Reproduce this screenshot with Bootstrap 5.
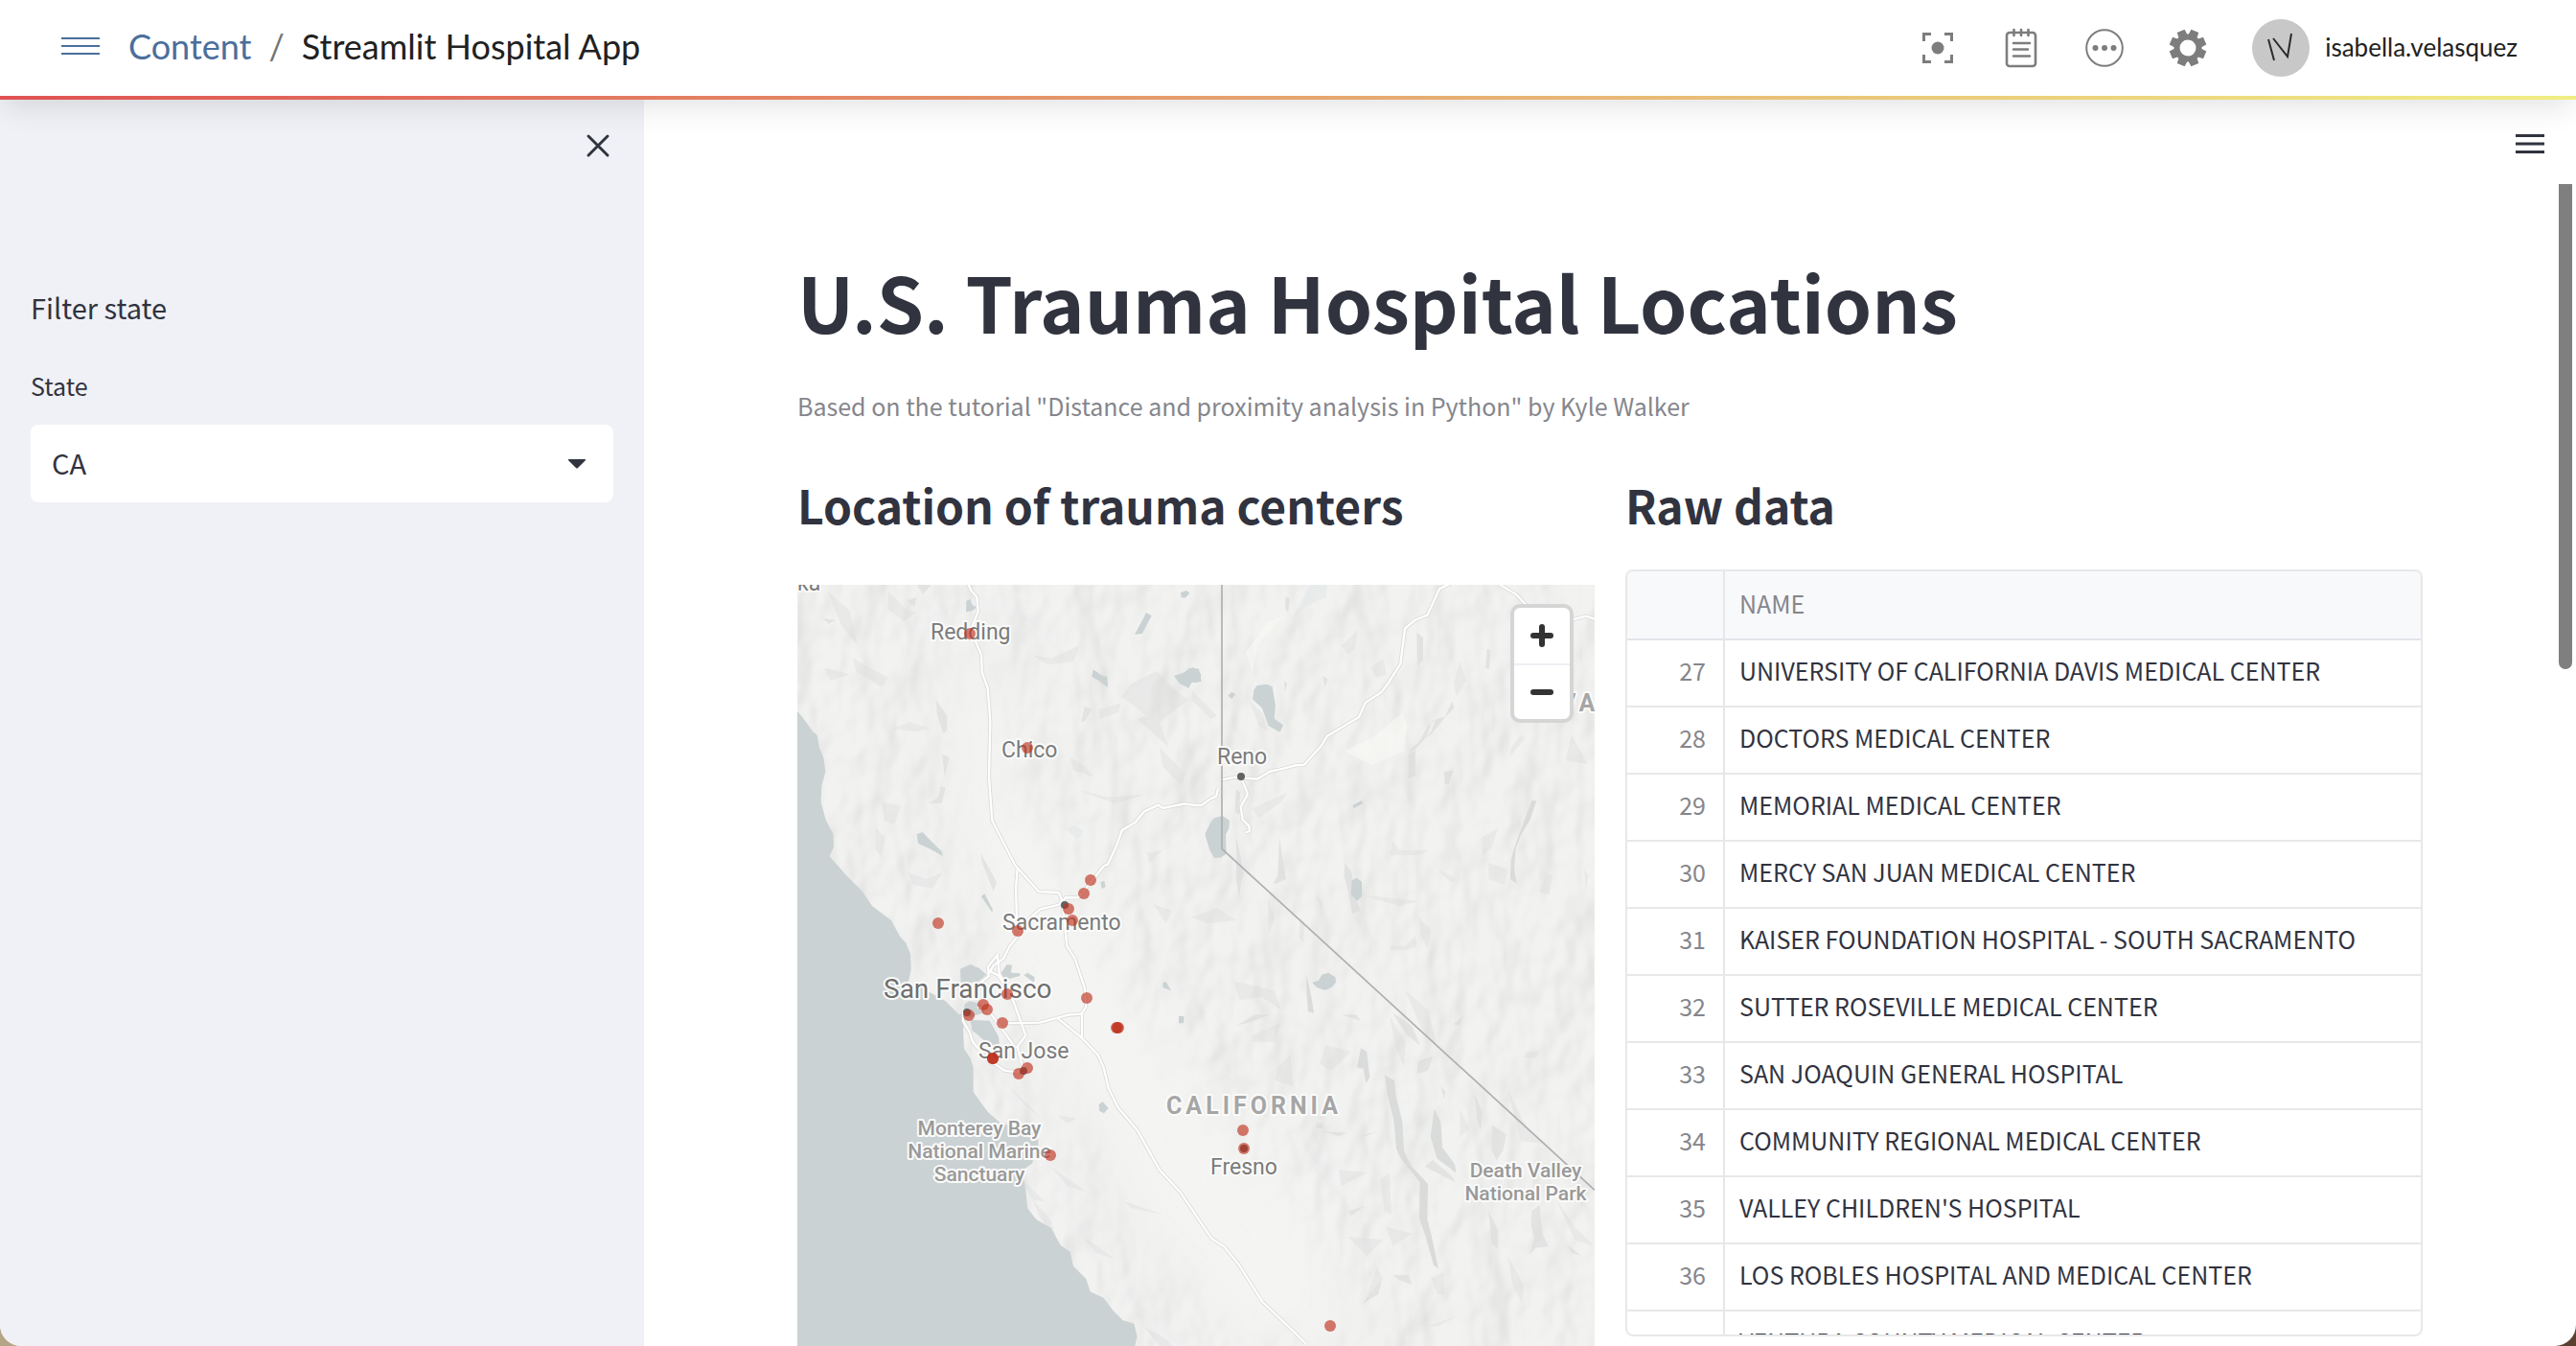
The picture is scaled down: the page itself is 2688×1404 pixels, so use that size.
<!DOCTYPE html>
<html lang="en">
<head>
<meta charset="utf-8">
<meta name="viewport" content="width=device-width, initial-scale=1">
<title>Streamlit Hospital App</title>
<link href="https://cdn.jsdelivr.net/npm/bootstrap@5.3.0/dist/css/bootstrap.min.css" rel="stylesheet">
<style>
:root { --ink: #31333f; --muted-ink: #85868c; --line: #e8e8e9; }
body { background: linear-gradient(90deg, #b3a585 50%, #5b4030 50%); height: 100vh; overflow: hidden; font-family: "Noto Sans CJK SC", "Noto Sans", sans-serif; color: var(--ink); }
.app-frame { background: #fff; border-radius: 0 0 22px 22px; }
.topbar { font-family: Lato, sans-serif; height: 104px; padding: 0 61px 4px 64px; z-index: 3; background: linear-gradient(90deg, #e05252, #e8b874 62%, #f0ee83) bottom / 100% 4px no-repeat, #fff; box-shadow: 0 10px 30px -4px rgba(0,0,0,.12); }
.crumbs { font-size: 36px; line-height: 44px; gap: 18px; color: #212121; padding-bottom: 4px; }
.crumbs a { color: #4a6f9c; text-decoration: none; }
.crumbs .divider { color: #757575; }
.nav-toggle { margin: 0 30px 4px 0; }
.tools { gap: 27px; margin-right: 37px; }
.tool { width: 60px; height: 60px; color: #7d7d7d; }
.plain { background: none; border: 0; padding: 0; display: flex; align-items: center; justify-content: center; }
.user-name { font-size: 26px; line-height: 32px; color: #212121; padding-bottom: 2px; }
.side { flex: 0 0 25%; background: #f0f1f6; padding: 0 32px; }
.bar-row { height: 96px; }
.side h2 { font-size: 29px; line-height: 40px; font-weight: 400; margin: 100px 0 42px; }
.side label { font-size: 25px; line-height: 40px; margin-bottom: 21px; }
.state-select { height: 81px; font-size: 29px; line-height: 40px; padding: 0 64px 4px 22px; border: 0; border-radius: 8px; color: var(--ink); background-color: #fff; background-position: right 28px center; background-size: 20px 10px;
  --bs-form-select-bg-img: url("data:image/svg+xml,%3csvg xmlns='http://www.w3.org/2000/svg' viewBox='0 0 20 10'%3e%3cpath d='M2 0h16q2 0 .6 1.4L11 9q-1 1-2 0L1.400 1.400Q0 0 2 0z' fill='%2331333f'/%3e%3c/svg%3e"); }
.content-pad { padding: 0 160px; }
h1.page-title { font-size: 79px; line-height: 96px; font-weight: 700; margin: 66px 0 41px; }
.caption-text { font-size: 25px; line-height: 40px; color: var(--muted-ink); margin: 0 0 53px; }
.section-title { font-size: 48px; line-height: 60px; font-weight: 700; margin: 0 0 38px; }
.split { --bs-gutter-x: 32px; }
.map-box svg.map { display: block; width: 100%; }
.section-title + .map-box { margin-top: 54px; }
.zoomer { top: 20px; right: 22px; border: 4px solid #d5d5d5; border-radius: 10px; background: #fff; }
.zoomer button { width: 58px; height: 58px; }
.zoomer button + button { border-top: 2px solid #eeeff3; }
.frame { height: 800px; border: 2px solid var(--line); border-radius: 8px; overflow: hidden; }
.grid-data { font-size: 25px; margin: 0; table-layout: fixed; width: 100%; border-collapse: separate; border-spacing: 0; }
.grid-data th, .grid-data td { height: 70px; line-height: 62px; padding: 0 16px 6px; border-bottom: 2px solid var(--line); font-weight: 400; white-space: nowrap; }
.grid-data thead th { height: 72px; line-height: 66px; padding-bottom: 4px; background: #f8f9fb; color: var(--muted-ink); border-bottom-color: #e3e4e9; }
.grid-data th:first-child { width: 102px; text-align: right; padding-right: 18px; border-right: 2px solid #e6e7ea; color: var(--muted-ink); }
.grid-data td, .grid-data thead th:last-child { padding-left: 15px; }
.thumb { right: 4px; top: 88px; width: 14px; height: 506px; background: #7f7f7f; border-radius: 0 0 7px 7px; }
.menu-row { padding: 0 32px 4px 0; }
.map text { font-family: Roboto, sans-serif; paint-order: stroke; stroke: #fbfbfa; stroke-width: 4px; stroke-linejoin: round; }
.city { font-size: 23px; fill: #7b7b7b; }
.big-city { font-size: 28px; fill: #6f6f6f; }
.park { font-size: 21px; font-weight: 500; fill: #999; text-anchor: middle; }
.region { font-size: 25px; font-weight: 700; fill: #a6a6a6; letter-spacing: 4px; }
</style>
<script src="https://cdn.jsdelivr.net/npm/bootstrap@5.3.0/dist/js/bootstrap.bundle.min.js"></script>
</head>
<body>
<div class="app-frame vh-100 d-flex flex-column overflow-hidden">
<header class="topbar d-flex align-items-center position-relative flex-shrink-0">
  <button class="plain nav-toggle" type="button" aria-label="Open navigation"><svg width="40" height="18" stroke="#4a6f9c" stroke-width="2"><path d="M0 1h40M0 9h40M0 17h40"/></svg></button>
  <nav class="crumbs d-flex align-items-center" aria-label="breadcrumb"><a href="#">Content</a><span class="divider">/</span><span>Streamlit Hospital App</span></nav>
  <div class="tools d-flex ms-auto">
    <button class="plain tool" type="button" aria-label="Focus"><svg width="32" height="32" fill="none" stroke="currentColor" stroke-width="3"><path d="M1.500 9V1.500H9M23 1.500h7.500V9M30.500 23v7.500H23M9 30.500H1.500V23"/><circle cx="16" cy="16" r="6.500" fill="currentColor" stroke="none"/></svg></button>
    <button class="plain tool" type="button" aria-label="Notes"><svg width="34" height="42" fill="none" stroke="currentColor" stroke-width="2.600" stroke-linecap="round"><rect x="2" y="5" width="30" height="35" rx="3"/><path d="M9.500 2v6M17 2v6M24.500 2v6M9 16h17M9 22.500h15M9 29.500h17"/></svg></button>
    <button class="plain tool" type="button" aria-label="More"><svg width="40" height="40"><circle cx="20" cy="20" r="18.800" fill="none" stroke="currentColor" stroke-width="2"/><g fill="currentColor"><circle cx="10.500" cy="20" r="3"/><circle cx="20" cy="20" r="3"/><circle cx="29.500" cy="20" r="3"/></g></svg></button>
    <button class="plain tool" type="button" aria-label="Settings"><svg id="gear" width="40" height="40" viewBox="-20 -20 40 40"></svg></button>
  </div>
  <div class="d-flex align-items-center gap-3">
    <svg width="60" height="60" aria-label="Profile"><circle cx="30" cy="30" r="30" fill="#c8c8c8"/><path d="M17 21l6 22M22 20l15 19 4-24" fill="none" stroke="#2b2b2b" stroke-width="2"/></svg>
    <span class="user-name">isabella.velasquez</span>
  </div>
</header>

<div class="d-flex flex-grow-1 overflow-hidden">
  <aside class="side">
    <div class="bar-row d-flex align-items-center justify-content-end">
      <button class="plain" type="button" aria-label="Close sidebar"><svg width="32" height="32" stroke="#31333f" stroke-width="3" stroke-linecap="round"><path d="M6 6l20 20M26 6L6 26"/></svg></button>
    </div>
    <h2>Filter state</h2>
    <label class="d-block" for="state">State</label>
    <select id="state" class="form-select state-select"><option>CA</option></select>
  </aside>

  <main class="flex-grow-1 position-relative overflow-hidden">
    <div class="bar-row menu-row d-flex align-items-center justify-content-end">
      <button class="plain" type="button" aria-label="Main menu"><svg width="32" height="22" stroke="#31333f" stroke-width="3"><path d="M1 2.500h30M1 11h30M1 19.500h30"/></svg></button>
    </div>
    <div class="thumb position-absolute"></div>
    <div class="content-pad">
      <h1 class="page-title">U.S. Trauma Hospital Locations</h1>
      <p class="caption-text">Based on the tutorial "Distance and proximity analysis in Python" by Kyle Walker</p>
      <div class="row split">
        <section class="col-6">
          <h2 class="section-title">Location of trauma centers</h2>
          <div class="map-box position-relative">
<svg class="map" viewBox="0 0 832 794" role="img" aria-label="Map of trauma centers in California">
<defs>
  <filter id="relief" x="0" y="0" width="100%" height="100%" color-interpolation-filters="sRGB">
    <feTurbulence type="fractalNoise" baseFrequency=".022 .014" numOctaves="3" seed="11" result="n"/>
    <feDiffuseLighting in="n" surfaceScale="9" diffuseConstant="1.080" lighting-color="#f3f3f4"><feDistantLight azimuth="215" elevation="62"/></feDiffuseLighting>
  </filter>
  <filter id="soft"><feGaussianBlur stdDeviation="28"/></filter>
  <mask id="hills"><rect width="832" height="794" fill="#fff"/>
    <path filter="url(#soft)" fill="#000" d="M150 60L230 60L225 200L290 310L330 400L440 560L560 690L600 800L470 800L360 700L260 520L205 400L160 260Z"/>
  </mask>
</defs>
<rect width="832" height="794" fill="#f0f0ef"/>
<path fill="#f4f4f3" filter="url(#soft)" d="M172 80L218 95L226 210L298 300L345 400L440 540L560 650L560 794L470 794L360 650L290 520L215 420L175 270L165 160Z"/>
<g mask="url(#hills)"><rect width="832" height="794" filter="url(#relief)" opacity=".13"/></g>
<g transform="scale(.333333) translate(-36 -60)">
  <!-- ridges and valleys -->
  <g fill="#dadbdb">
    <path opacity=".6" d="M410 60h45l-25 30zM380 110l30-12-8 30zM115 165l40 5-20 12zM470 420l35 50v45l-12 10-20-60zM485 690l15 5-12 48h-40l28-18zM935 440l22 10-20 35-12 5zM490 590l22 10-15 60zM610 900l50 90-10 30-35-90z"/>
    <path opacity=".35" d="M130 80l70 60 25 110-50-60zM210 290l110 60-20 30-80-50zM120 320l80 20-60 20zM330 510l60-20 60 20-40 10zM320 80l60 60 30 5-40 30-50-40zM770 280l60 10 90-40-20 50-80 10zM980 450l70-20-10 30-60 20zM1050 410l80 60-30 10 100 90-30-80 90-70-40-30-60-60-80 40zM890 600l50 30 20 30-60-20zM1170 570l80 80-10 40-60-60zM910 700l100 25 120-10-100 30zM380 960l60 20 50-20-30 50-60-10zM280 820l30 30-10 60-20-20zM300 740l60 10-20 60-30-10zM1130 900l50-10-40 40zM1150 1060l60 20-20 40z"/>
    <g transform="translate(1260)">
      <path opacity=".7" d="M305 95l12 10-4 40-10-10zM715 210l20 15v70l-18 20zM825 425l8 20-25 25-45 15-20 55 20-15 40-50zM775 480l-15 40-50 55-20 10 10-15 25-20 25-50zM690 590l20-12v80l-22 8zM800 645l30-5-10 30-5 15h-12zM935 260l12 5-6 60-10-5zM300 360l10 10-8 25zM420 345l16 10-8 25zM150 700l12 10-2 70-14-10zM150 850l14 60 8 50-14 75-8-50zM285 850l15 100 6 30-30 15h-10l14-25zM490 930l22 30 6 60 20 60-25 10-10-60-15-60z"/>
      <path d="M1075 735h15l-20 60-30 50-15 40-5 60 8 50-20-15 2-60 15-50z"/>
      <path opacity=".35" d="M10 390l80 80-20 10-60-60zM190 420l40 40 20 60-30-20zM480 250l50-50-10 60-20 20zM570 320l40-30 10 50-30 10zM850 300l20 60-30 50-10-40zM1040 530l15 10-50 60 5-30zM1200 530l50 90-70-10zM200 760l110-50-20 30-70 50zM640 860l20 30h90l-20 15h-100zM920 850l50-30-20 60-30 30zM780 950l60 30-20 10zM540 1030l180 20-60 15zM720 1100l40 40-10 60-20-40zM630 1190h50l30-30 5 30-30 12h-50zM350 1100l14 20-4 60-14-20zM250 1040l20 60-20 60zM10 1100l80-30 60 40-90 10zM400 1030l20 20-5 30zM940 930l60 20-10 50-50-20zM1120 960l20 10-10 60-30-10zM1240 950l12 20-8 50z"/>
    </g>
    <g transform="translate(1260 1200)">
      <path d="M625 400l20 10 5 50 20 80 5 90 20 45 55 60-2 110 15 60 20 95-15-10-25-90-20-60 2-110-40-50-20-25-14-30-8-90-20-80-8-60zM770 500l20 40 5 80 40 55 3 25-60-45-20-70zM540 310l18 10 10 80-12 20-8-45-20-5zM370 80l15 70 8 50-18-5-5-60z"/>
      <path opacity=".6" d="M640 200l60 40 25 60-40-30zM720 350l45-15-15 45-35 10zM950 550l45 30-10 50-20 30-15-30zM790 430l15 15-5 25zM940 820l30 60v60l-20-20zM1075 820l25-20 8 90 20 40-40 5-20 20 15-50-10-40zM895 450l25 60-5 60-12-40zM150 240l60-35h45l-50 20zM420 570l80 5-30 10zM590 570l-80 25 60-15zM740 680l95 50-10-20-60-50zM1185 925l45 35-30-10zM500 820l50-15-40 30zM545 1110l60-75-10 45zM640 1020h50l10 30-40-15zM400 545h22v16h-22zM830 235l30-25-10 30zM480 205h45l15 20z"/>
      <path opacity=".35" d="M680 130l70 60 30 120-50-60zM630 210l50 80-5 80-25-60zM140 100l130 30 20 60-60-40-70 10zM200 270l90-40-20 60h-70zM280 370l40-40 10 100-60-20zM430 300l80 20-60 60-40-20zM470 690l90 10-80 40zM600 720l30-20 5 130-20-10zM500 900l110 10-50 50zM620 870l80 20-60 40zM590 1000l20 30-60 80zM1000 440l60 120 60 50-80-10zM1060 320l40 0-10 20h-40zM850 500l30 60-30 30zM1150 780l60 90 60 60-60-20zM1000 960l50 90-5 60-30-60zM750 1180l90-30-60 30zM760 1030l40-20v70h-20z"/>
    </g>
    <path opacity=".4" transform="translate(0 1200)" d="M740 720l70 70-40-5zM690 420l110 110-50-40zM830 680l110 80-60-20zM1060 790l120 40-100-20zM930 900l100 70-60-20zM850 520l60 10-30 15zM770 780l60 70 15 50-50-60zM1120 1180l70 40 20 22h-40z"/>
  </g>
  <!-- ocean -->
  <path fill="#cad2d3" d="M36 455l24 30 25 35 13 10 7 40 13 30 6 45-12 45-2 50 15 55 23 45 2 40-13 30 53 60 50 50 30 45 60 45 27 50 18 20 15 35 2 50-14 60 32-18 40 28 50 28 42 42 15-3 3-30 15-10 30 8 25 26-50 16h-20l-5 40 3 60 20 30 9 30v75l28 40 20 25 35 30 45 15 40-10 35 45v30l-20 50-30 20 10 60 7 60 28 35 45 25 30 55 30 20 10 45 40 40 13 40 42 20 30 40 30 30 35 10 10 40-10 42H36z"/>
  <g fill="#cad2d3">
    <path d="M546 1262l32-14 28 12 22 20-28 22-52 6zM578 1422l60 2 28 50 4 40-45-25-42-35zM672 1278l20-30 16 2-4 24 30 2-2 8-45 12zM745 1282l12-8 22 14-2 16zM565 110l12-5 5 16 14 10-12 10-20 4zM1092 215l26-48 10-20 17 10-15 28-14 28zM962 325l26 18 18 5 2 34-28-22-22-12zM1215 345l30-10 20-15 28 3 8 40-30 2-10 18-28-14zM410 840l18-6 15 16 45 45 3 14-35-20-42-20zM612 1035l10-8 26 50-2 8zM985 990l12-3 4 18-12 6zM980 1685l12-7 18 20-14 16-15-8zM1180 1305l10-3 16 28-26-10zM1230 1410h16v22h-16zM1236 85l18-7 10 8-14 15-12-2z"/>
    <g transform="translate(1260)"><path d="M-5 330l20-12 24 20v22l-14 6-25-4zM215 375l30-4 18 8 10 60-4 40 28 20-10 22-36-20-20-55-30-28 5-30zM124 407l12-12 12 8-12 14zM82 790l25-7 22 14-2 25-10 20 2 60-18 12h-20l-14-24-15-50 20-40zM515 750l28-15 3 10-28 14zM512 985l15-8 16 12v46l-14 14-20-20z"/><path transform="translate(0 1200)" d="M388 104l20-6 10-18 20-6 22 14 2 16-14 16-20 9-26-9z"/></g>
  </g>
  <path opacity=".6" fill="#e3e8e8" d="M880 825l20-13 28 15v20l-20 8zM1640 60h55l-4 40-60 25-50 50z"/>
  <g opacity=".65" fill="#f7f7f5"><path d="M1750 580l100-50 80-70 15 40-10 80-100 45zM1440 270l70-95 50-20-80 90-20 90z"/></g>
  <!-- highways: grey casing with a white core -->
  <g fill="none" stroke-linejoin="round" stroke="#dadad9" stroke-width="12" id="roads">
    <path d="M572 60l8 18 18 20 4 45-18 45 10 50 18 40 2 55 18 50 8 105-4 175 10 135 72 140 74 82 62 3 10 22-8 16-60 14-40 35-30 50-25 30-20 40-30 20-15 25M862 1060l14-22 40 1 25-30 55-70 12-4 28-60 16-46 42-26 28-34 45-20 12 10 70-14 30 5 22 0 28-20 18-8 6-24M865 1050l15 140 25 40 30 90 5 60-16 26M725 950l-5 60 4 130"/>
    <path d="M665 1215l-32 40 2 30-40 30M662 1215l6 60 45 90 38 105-26 35 15 60M635 1268l30 14 45 70M600 1380l40 20 80 110M690 1432l105-2 90-24 42-3v80M848 1414l77 62 52 55 18 40 15 65 30 60 60 70 70 125 65 70 97 144 40 26 45 55 75 118 100 95 35 35M555 1395v30l20 35 10 30 40 50 60 40 40 5 30-25"/>
    <path d="M1365 670l40-8 70 6 40-24 30-6 55-14h22l54-60 18-30 100-60 20-45 50-32 22-30 38-60 14-110 30-26 40-16 38-82 40-20M2236 60l50 30 40 42M2450 172l55-14 40 14M1430 675l16 40-22 40 6 40 20 20 2 16-12 4"/>
  </g>
  <use href="#roads" class="core"/>
  <!-- state line -->
  <path fill="none" stroke="#aeafb0" stroke-width="5" d="M1365 60V886L2532 1954"/>
</g>
<g class="labels">
  <text class="city" x="0" y="6">ka</text><text class="city" x="139" y="57">Redding</text><text class="city" x="213" y="180">Chico</text><text class="city" x="438" y="187">Reno</text>
  <text class="city" x="214" y="360">Sacramento</text><text class="big-city" x="90" y="431">San Francisco</text><text class="city" x="189" y="494">San Jose</text><text class="city" x="431" y="615">Fresno</text>
  <text class="park" x="190" y="574">Monterey Bay</text><text class="park" x="190" y="598">National Marine</text><text class="park" x="190" y="622">Sanctuary</text>
  <text class="park" x="760" y="618">Death Valley</text><text class="park" x="760" y="642">National Park</text>
  <text class="region" x="385" y="552">CALIFORNIA</text><text class="region" x="796" y="132">VA</text>
</g>
<g fill="#626262"><circle cx="279" cy="334" r="4"/><circle cx="463" cy="200" r="4"/><circle cx="177" cy="446" r="4"/><circle cx="236" cy="507" r="4"/><circle cx="466" cy="588" r="4"/></g>
<g id="pins" fill="#be321e" fill-opacity=".65"></g>
</svg>
            <div class="zoomer position-absolute">
              <button class="plain" type="button" aria-label="Zoom in"><svg width="24" height="24" stroke="#333" stroke-width="6" stroke-linecap="round"><path d="M3 12h18M12 3v18"/></svg></button>
              <button class="plain" type="button" aria-label="Zoom out"><svg width="24" height="24" stroke="#333" stroke-width="6" stroke-linecap="round"><path d="M3 12h18"/></svg></button>
            </div>
          </div>
        </section>
        <section class="col-6">
          <h2 class="section-title">Raw data</h2>
          <div class="frame">
            <table class="grid-data">
              <thead><tr><th scope="col"></th><th scope="col">NAME</th></tr></thead>
              <tbody>
                <tr><th scope="row">27</th><td>UNIVERSITY OF CALIFORNIA DAVIS MEDICAL CENTER</td></tr>
                <tr><th scope="row">28</th><td>DOCTORS MEDICAL CENTER</td></tr>
                <tr><th scope="row">29</th><td>MEMORIAL MEDICAL CENTER</td></tr>
                <tr><th scope="row">30</th><td>MERCY SAN JUAN MEDICAL CENTER</td></tr>
                <tr><th scope="row">31</th><td>KAISER FOUNDATION HOSPITAL - SOUTH SACRAMENTO</td></tr>
                <tr><th scope="row">32</th><td>SUTTER ROSEVILLE MEDICAL CENTER</td></tr>
                <tr><th scope="row">33</th><td>SAN JOAQUIN GENERAL HOSPITAL</td></tr>
                <tr><th scope="row">34</th><td>COMMUNITY REGIONAL MEDICAL CENTER</td></tr>
                <tr><th scope="row">35</th><td>VALLEY CHILDREN'S HOSPITAL</td></tr>
                <tr><th scope="row">36</th><td>LOS ROBLES HOSPITAL AND MEDICAL CENTER</td></tr>
                <tr><th scope="row">37</th><td>VENTURA COUNTY MEDICAL CENTER</td></tr>
              </tbody>
            </table>
          </div>
        </section>
      </div>
    </div>
  </main>
</div>
</div>
<script>
const NS = "http://www.w3.org/2000/svg";
// second pass over the highways, narrower and white
const core = document.getElementById("roads").cloneNode(true);
core.removeAttribute("id");
core.setAttribute("stroke", "#fff");
core.setAttribute("stroke-width", "7");
document.querySelector(".core").replaceWith(core);
// hospital positions on the map
const hospitals = [[180,51],[240,170],[306,308],[299,322],[283,338],[287,350],[230,361],[147,353],[219,427],[302,431],[194,438],[198,443],[179,449],[214,457],[333,462],[335,462],[334,462],[204,494],[204,494],[204,494],[240,504],[231,510],[264,595],[465,569],[466,588],[556,773]];
hospitals.forEach(([x, y]) => {
  const c = document.createElementNS(NS, "circle");
  c.setAttribute("cx", x); c.setAttribute("cy", y); c.setAttribute("r", 6);
  document.getElementById("pins").append(c);
});
// eight-toothed gear
let d = "";
for (let i = 0; i < 8; i++) {
  const a = (i * 45 - 67.5) * Math.PI / 180;
  [[14.5, -.33], [19.6, -.22], [19.6, .22], [14.5, .33]].forEach(([r, o], k) => {
    d += (i || k ? "L" : "M") + (r * Math.cos(a + o)).toFixed(1) + " " + (r * Math.sin(a + o)).toFixed(1);
  });
}
const gear = document.createElementNS(NS, "path");
gear.setAttribute("d", d + "ZM8.500 0A8.500 8.500 0 1 0 -8.500 0A8.500 8.500 0 1 0 8.500 0Z");
gear.setAttribute("fill", "currentColor");
gear.setAttribute("fill-rule", "evenodd");
document.getElementById("gear").append(gear);
</script>
</body>
</html>
